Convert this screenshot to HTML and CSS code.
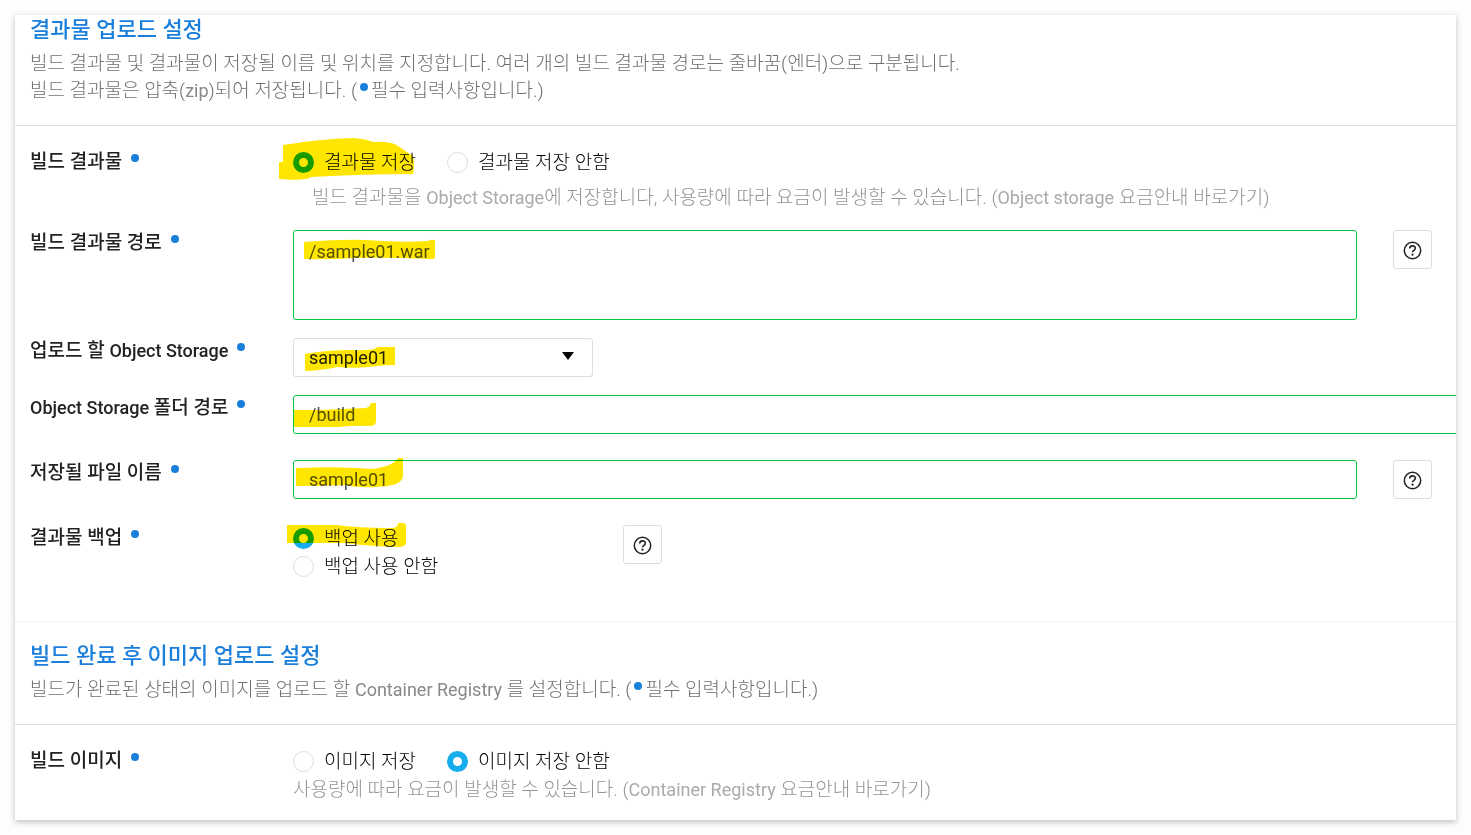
FILE: index.html
```
<!DOCTYPE html>
<html lang="ko">
<head>
  <meta charset="UTF-8" />
  <meta name="viewport" content="width=device-width, initial-scale=1.0" />
  <title>결과물 업로드 설정</title>
  <link rel="stylesheet" href="styles.css">
</head>
<body>

  <!-- Shared help icon -->
  <svg class="defs" width="0" height="0" aria-hidden="true">
    <symbol id="help" viewBox="0 0 19 19">
      <circle cx="9.5" cy="9.5" r="8.2" fill="none" stroke="currentColor" stroke-width="1.5" />
      <path d="M6.7 7.6 C6.7 4 12.3 4 12.3 7.3 C12.3 9.4 9.5 9.2 9.5 11.3" fill="none" stroke="currentColor" stroke-width="1.6" />
      <circle cx="9.5" cy="13.7" r="1.1" fill="currentColor" />
    </symbol>
  </svg>

  <main class="card">

    <!-- Result upload -->
    <section>
      <header class="head">
        <h2>결과물 업로드 설정</h2>
        <p>빌드 결과물 및 결과물이 저장될 이름 및 위치를 지정합니다. 여러 개의 빌드 결과물 경로는 줄바꿈(엔터)으로 구분됩니다.<br>
        빌드 결과물은 압축(<span class="en">zip</span>)되어 저장됩니다. (<i class="dot"></i>필수 입력사항입니다.)</p>
      </header>

      <div class="rows">
        <div class="row">
          <div class="label" id="resultLabel">빌드 결과물<i class="dot"></i></div>
          <div class="control" role="radiogroup" aria-labelledby="resultLabel">
            <div class="options">
              <label class="option"><input type="radio" name="result" checked>결과물 저장</label>
              <label class="option"><input type="radio" name="result">결과물 저장 안함</label>
            </div>
            <p class="hint indent">빌드 결과물을 <span class="en">Object Storage</span>에 저장합니다, 사용량에 따라 요금이 발생할 수 있습니다. (<span class="en">Object storage</span> 요금안내 바로가기)</p>
            <svg class="marker mark-result" width="140" height="44" viewBox="0 0 140 44"><path d="M4 7 Q40 1 75 0 Q88 1 94 4 Q112 3 119 8 L134 18 Q136 27 134 36 Q85 36 32 39 Q28 43 0 41 V24 H4 Z" /></svg>
          </div>
        </div>

        <div class="row">
          <label class="label" for="path">빌드 결과물 경로<i class="dot"></i></label>
          <div class="control field">
            <textarea id="path" spellcheck="false">/sample01.war</textarea>
            <button class="help" type="button" aria-label="도움말"><svg width="19" height="19"><use href="#help" /></svg></button>
            <svg class="marker mark-path" width="132" height="22" viewBox="0 0 132 22"><path d="M0 3 Q40 0 62 1 Q95 4 124 2 Q127 0 131 1 V18 Q131 20 128 20 Q80 18 50 19 Q25 21 0 20 Z" /></svg>
          </div>
        </div>

        <div class="row">
          <label class="label" for="storage">업로드 할 <span class="en">Object Storage</span><i class="dot"></i></label>
          <div class="control">
            <div class="select">
              <select id="storage"><option>sample01</option></select>
              <svg class="arrow" width="12" height="8" viewBox="0 0 12 8"><path d="M0 0 H12 L6 8 Z" /></svg>
            </div>
            <svg class="marker mark-storage" width="91" height="26" viewBox="0 0 91 26"><path d="M0 7 Q20 3 48 3 Q68 4 73 0 H90 V18 Q80 18 72 19 Q55 22 32 20 Q20 23 0 24 Z" /></svg>
          </div>
        </div>

        <div class="row wide-gap">
          <label class="label" for="folder"><span class="en">Object Storage</span> 폴더 경로<i class="dot"></i></label>
          <div class="control">
            <input class="text overflow" id="folder" type="text" value="/build">
            <svg class="marker mark-folder" width="84" height="26" viewBox="0 0 84 26"><path d="M0 7 H25 Q50 6 72 5 Q76 4 77 0 H82 V18 Q82 23 76 23 Q62 22 45 24 H0 Z" /></svg>
          </div>
        </div>

        <div class="row wide-gap">
          <label class="label" for="file">저장될 파일 이름<i class="dot"></i></label>
          <div class="control field">
            <input class="text" id="file" type="text" value="sample01">
            <button class="help" type="button" aria-label="도움말"><svg width="19" height="19"><use href="#help" /></svg></button>
            <svg class="marker mark-file" width="108" height="31" viewBox="0 0 108 31"><path d="M0 10 Q45 8 75 11 Q96 9 102 0 H107 V18 Q107 28 80 29 Q62 30 50 27 Q25 28 0 28 Z" /></svg>
          </div>
        </div>

        <div class="row last">
          <div class="label" id="backupLabel">결과물 백업<i class="dot"></i></div>
          <div class="control backup" role="radiogroup" aria-labelledby="backupLabel">
            <div class="stack">
              <label class="option"><input type="radio" name="backup" checked>백업 사용</label>
              <label class="option"><input type="radio" name="backup">백업 사용 안함</label>
            </div>
            <button class="help" type="button" aria-label="도움말"><svg width="19" height="19"><use href="#help" /></svg></button>
            <svg class="marker mark-backup" width="120" height="26" viewBox="0 0 120 26"><path d="M0 2 H50 Q70 5 105 5 Q111 5 111 0 H116 Q119 0 119 4 V20 Q118 24 112 24 Q80 23 58 20 H0 Z" /></svg>
          </div>
        </div>
      </div>
    </section>

    <!-- Image upload -->
    <section class="second">
      <header class="head">
        <h2>빌드 완료 후 이미지 업로드 설정</h2>
        <p>빌드가 완료된 상태의 이미지를 업로드 할 <span class="en">Container Registry</span> 를 설정합니다. (<i class="dot"></i>필수 입력사항입니다.)</p>
      </header>

      <div class="rows">
        <div class="row">
          <div class="label" id="imageLabel">빌드 이미지<i class="dot"></i></div>
          <div class="control" role="radiogroup" aria-labelledby="imageLabel">
            <div class="options">
              <label class="option"><input type="radio" name="image">이미지 저장</label>
              <label class="option"><input type="radio" name="image" checked>이미지 저장 안함</label>
            </div>
            <p class="hint">사용량에 따라 요금이 발생할 수 있습니다. (<span class="en">Container Registry</span> 요금안내 바로가기)</p>
          </div>
        </div>
      </div>
    </section>

  </main>

</body>
</html>
```
FILE: styles.css
```
* {
  box-sizing: border-box;
}

body {
  margin: 0;
  padding: 15px;
  background: #fdfdfd;
  color: #222;
  font-family: Roboto, 'Noto Sans CJK KR', sans-serif;
  font-size: 19px;
}

h2, p {
  margin: 0;
}

.defs {
  position: absolute;
}

.card {
  background: #fff;
  box-shadow: 0 2px 6px rgba(0, 0, 0, 0.25);
  overflow: hidden;
}

.second {
  border-top: 1px solid #f3f3f3;
  padding-top: 19px;
}

.head {
  padding: 1px 15px 21px;
  border-bottom: 1px solid #e0e0e0;
}

.head h2 {
  color: #1a7fdb;
  font-size: 22px;
  font-weight: 500;
  line-height: 28px;
  margin-bottom: 6px;
}

.head p {
  color: #707070;
  font-weight: 300;
  line-height: 27px;
}

.en {
  font-size: 18px;
}

.head .en {
  color: #888;
  font-weight: 400;
}

.hint .en {
  color: #aaa;
  font-weight: 400;
}

.dot {
  display: inline-block;
  width: 8px;
  height: 8px;
  margin: 0 3px;
  border-radius: 50%;
  background: #1a7fdb;
  vertical-align: 6px;
}

.rows {
  padding: 23px 24px 0 15px;
}

.row {
  display: grid;
  grid-template-columns: 263px 1fr;
  margin-bottom: 18px;
}

.row.wide-gap {
  margin-bottom: 26px;
}

.row.last {
  margin-bottom: 40px;
}

.label {
  font-weight: 500;
  line-height: 26px;
}

.label .dot {
  margin-left: 9px;
}

.control {
  position: relative;
  min-width: 0;
}

.options {
  display: flex;
  gap: 31px;
}

.option {
  display: flex;
  align-items: center;
  gap: 10px;
  color: #000;
  font-weight: 300;
  line-height: 28px;
}

.option input {
  appearance: none;
  width: 21px;
  height: 21px;
  margin: 0 0 2px;
  border: 1px solid #ddd;
  border-radius: 50%;
  background: #fff;
}

.option input:checked {
  border: 6px solid #17adec;
}

.hint {
  color: #949494;
  font-weight: 300;
  line-height: 28px;
}

.hint.indent {
  margin: 7px 0 0 19px;
}

.field {
  display: flex;
  align-items: flex-start;
  gap: 36px;
}

textarea, .text, select {
  display: block;
  border: 1px solid #00c73c;
  border-radius: 3px;
  background: #fff;
  color: #555;
  font-family: inherit;
  font-size: 18px;
  outline: none;
}

textarea {
  flex: 1;
  height: 90px;
  padding: 7px 15px;
  line-height: 27px;
  resize: none;
}

.text {
  flex: 1;
  width: 100%;
  height: 39px;
  padding: 0 15px;
}

/* runs under the right edge of the card */
.text.overflow {
  width: calc(100% + 40px);
}

.select {
  position: relative;
  width: 300px;
}

select {
  appearance: none;
  width: 100%;
  height: 39px;
  padding: 0 15px;
  border-color: #ddd;
  color: #222;
}

.arrow {
  position: absolute;
  top: 14px;
  right: 19px;
  pointer-events: none;
}

.help {
  display: flex;
  align-items: center;
  justify-content: center;
  width: 39px;
  height: 39px;
  padding: 2px 0 0;
  border: 1px solid #ddd;
  border-radius: 3px;
  background: #fff;
  color: #222;
  cursor: pointer;
}

.backup {
  display: flex;
  align-items: flex-start;
}

.stack {
  width: 330px;
}

/* Highlighter strokes */
.marker {
  position: absolute;
  fill: #ffe600;
  mix-blend-mode: multiply;
  pointer-events: none;
}

.mark-result { top: -11px; left: -14px; }
.mark-path { top: 9px; left: 11px; }
.mark-storage { top: 9px; left: 12px; }
.mark-folder { top: 8px; left: 1px; }
.mark-file { top: -2px; left: 3px; }
.mark-backup { top: -2px; left: -6px; }

.second .row {
  margin-bottom: 16px;
}
```
